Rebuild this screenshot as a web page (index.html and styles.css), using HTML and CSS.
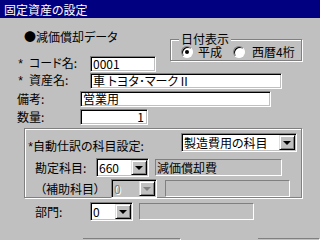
FILE: index.html
```html
<!DOCTYPE html>
<html lang="ja">
<head>
    <meta charset="UTF-8">
    <title>固定資産の設定</title>
    <link rel="stylesheet" href="styles.css">
</head>
<body>

<div class="title">固定資産の設定</div>

<div class="top">
    <div class="left">
        <div class="caption">●減価償却データ</div>
        <div class="row row-code">
            <span class="lbl"><span class="ast">*</span>コード名:</span>
            <div class="field w-code">0001</div>
        </div>
    </div>
    <div class="datebox">
        <span class="legend">日付表示</span>
        <div class="radios">
            <span class="radio on"></span><span class="rtext">平成</span>
            <span class="radio r2"></span><span class="rtext">西暦4桁</span>
        </div>
    </div>
</div>

<div class="row row-name">
    <span class="lbl"><span class="ast">*</span>資産名:</span>
    <div class="field w-name">車 トヨタ･マークⅡ</div>
</div>
<div class="row row-note">
    <span class="lbl lbl-s">備考:</span>
    <div class="field w-note">営業用</div>
</div>
<div class="row row-qty">
    <span class="lbl lbl-s">数量:</span>
    <div class="field w-qty num">1</div>
</div>

<div class="group">
    <div class="grow g1">
        <span class="glbl g1-lbl"><span class="ast-n">*</span>自動仕訳の科目設定:</span>
        <div class="combo w-kind"><span class="val">製造費用の科目</span><span class="arrow"></span></div>
    </div>
    <div class="grow g2">
        <span class="glbl g2-lbl">勘定科目:</span>
        <div class="combo w-acc"><span class="val">660</span><span class="arrow"></span></div>
        <div class="ro w-accname">減価償却費</div>
    </div>
    <div class="grow g3">
        <span class="glbl g3-lbl">（補助科目）</span>
        <div class="combo off w-sub"><span class="val">0</span><span class="arrow"></span></div>
        <div class="ro w-subname"></div>
    </div>
</div>

<div class="grow dept">
    <span class="glbl dept-lbl">部門:</span>
    <div class="combo w-dept"><span class="val">0</span><span class="arrow"></span></div>
    <div class="ro w-deptname"></div>
</div>

<div class="panes">
    <div class="pane p1"></div>
    <div class="pane p2"></div>
</div>

</body>
</html>
```

FILE: styles.css
```css
body {
    margin: 0;
    width: 320px;
    height: 240px;
    overflow: hidden;
    background: #c0c0c0;
    font-family: "Noto Sans CJK JP", "Liberation Sans", sans-serif;
    font-size: 12px;
    line-height: 14px;
    color: #000;
    font-feature-settings: "palt";
}
.title {
    height: 18px;
    background: #000080;
    color: #fff;
    padding-left: 4px;
    line-height: 19px;
}
.top {
    display: flex;
}
.left {
    width: 170px;
}
.caption {
    margin: 12px 0 0 24px;
    height: 14px;
}

/* form rows */
.row {
    display: flex;
    align-items: center;
    height: 16px;
    padding-left: 17px;
}
.row-code { margin-top: 12px; }
.row-name { margin-top: 1px; }
.row-note { margin-top: 2px; }
.row-qty { margin-top: 2px; }
.lbl {
    width: 73px;
    flex-shrink: 0;
}
.lbl-s {
    width: 63px;
}
.ast {
    display: inline-block;
    width: 12px;
    font-family: "Liberation Mono", monospace;
}
.ast-n {
    display: inline-block;
    width: 6px;
    font-family: "Liberation Mono", monospace;
}
.field {
    box-sizing: border-box;
    height: 16px;
    border: 1px solid;
    border-color: #808080 #fff #fff #808080;
    box-shadow: inset 1px 1px #000, inset -1px -1px #c0c0c0;
    background: #fff;
    padding: 0 3px 0 2px;
    line-height: 14px;
    white-space: nowrap;
    overflow: hidden;
}
.w-code { width: 66px; }
.w-name { width: 192px; }
.w-note { width: 191px; }
.w-qty { width: 68px; }
.num { text-align: right; }

/* date group */
.datebox {
    box-sizing: border-box;
    margin-top: 21px;
    width: 132px;
    height: 22px;
    border: 1px solid #808080;
    box-shadow: inset 1px 1px #fff, 1px 1px #fff;
    display: flex;
    flex-direction: column;
    align-items: flex-start;
}
.legend {
    margin: -7px 0 0 8px;
    padding: 0 2px;
    height: 12px;
    background: #c0c0c0;
    line-height: 12px;
}
.radios {
    display: flex;
    align-items: center;
    height: 12px;
    margin-top: 1px;
    padding-left: 10px;
}
.radio {
    position: relative;
    box-sizing: border-box;
    width: 12px;
    height: 12px;
    border-radius: 50%;
    border: 1px solid;
    border-color: #808080 #fff #fff #808080;
    box-shadow: inset 1px 1px #000;
    background: #fff;
}
.radio.on::after {
    content: "";
    position: absolute;
    left: 3px;
    top: 3px;
    width: 4px;
    height: 4px;
    border-radius: 50%;
    background: #000;
}
.rtext {
    margin-left: 5px;
    line-height: 12px;
}
.r2 {
    margin-left: 11px;
}
.r2 + .rtext {
    margin-left: 7px;
}

/* account group */
.group {
    box-sizing: border-box;
    margin: 3px 0 0 24px;
    width: 278px;
    height: 70px;
    border: 1px solid #808080;
    box-shadow: inset 1px 1px #fff, 1px 1px #fff;
    padding-top: 3px;
}
.grow {
    display: flex;
    align-items: center;
}
.g1 {
    align-items: flex-start;
    margin-top: 1px;
}
.g2 { margin-top: 3px; }
.g3 { margin-top: 2px; }
.glbl {
    flex-shrink: 0;
    white-space: nowrap;
}
.g1-lbl {
    width: 154px;
    padding: 6px 0 0 2px;
}
.g2-lbl {
    width: 61px;
    padding-left: 10px;
}
.g3-lbl {
    width: 71px;
    padding-left: 15px;
}
.dept {
    margin-top: 4px;
}
.dept-lbl {
    width: 55px;
    padding-left: 35px;
}

.combo {
    box-sizing: border-box;
    height: 19px;
    display: flex;
    border: 1px solid;
    border-color: #808080 #fff #fff #808080;
    box-shadow: inset 1px 1px #000, inset -1px -1px #c0c0c0;
    padding: 1px;
    background: #fff;
    flex-shrink: 0;
}
.combo .val {
    flex: 1;
    padding-left: 1px;
    line-height: 15px;
    white-space: nowrap;
    overflow: hidden;
}
.arrow {
    position: relative;
    box-sizing: border-box;
    width: 16px;
    height: 15px;
    background: #c0c0c0;
    border: 1px solid;
    border-color: #dfdfdf #000 #000 #dfdfdf;
    box-shadow: inset 1px 1px #fff, inset -1px -1px #808080;
}
.arrow::after {
    content: "";
    position: absolute;
    left: 3px;
    top: 5px;
    border-left: 4px solid transparent;
    border-right: 4px solid transparent;
    border-top: 4px solid #000;
}
.combo.off {
    background: #c0c0c0;
}
.combo.off .val {
    color: #808080;
    text-shadow: 1px 1px #fff;
}
.combo.off .arrow::after {
    border-top-color: #808080;
}
.w-kind { width: 116px; }
.w-acc { width: 53px; }
.w-sub { width: 46px; }
.w-dept { width: 43px; }

.ro {
    box-sizing: border-box;
    height: 17px;
    border: 1px solid;
    border-color: #808080 #fff #fff #808080;
    padding-left: 1px;
    line-height: 15px;
    white-space: nowrap;
}
.w-accname {
    width: 127px;
    margin-left: 6px;
}
.w-subname {
    width: 125px;
    margin-left: 8px;
}
.w-deptname {
    width: 115px;
    margin-left: 6px;
}

/* tops of the panes below, cut by the window edge */
.panes {
    display: flex;
    margin-top: 17px;
    padding-left: 83px;
}
.pane {
    box-sizing: border-box;
    height: 2px;
    border-top: 1px solid #808080;
    border-right: 1px solid #fff;
}
.p1 { width: 98px; }
.p2 {
    width: 62px;
    margin-left: 77px;
}
```
